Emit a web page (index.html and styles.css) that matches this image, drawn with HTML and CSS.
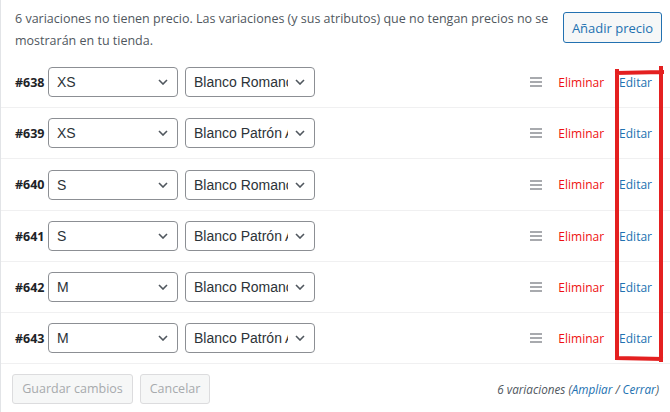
FILE: index.html
```html
<!DOCTYPE html>
<html lang="es">
<head>
<meta charset="utf-8">
<link rel="stylesheet" href="styles.css">
</head>
<body>
<div class="panel">
  <div class="notice">
    <p class="notice-text">6 variaciones no tienen precio. Las variaciones (y sus atributos) que no tengan precios no se mostrarán en tu tienda.</p>
    <button class="btn btn-primary-outline">Añadir precio</button>
  </div>

  <div class="rows">
    <div class="row">
      <strong class="vid">#638</strong>
      <div class="select"><span class="sel-text">XS</span><svg class="chev" width="10" height="6" viewBox="0 0 10 6"><path d="M1 1l4 4 4-4" fill="none" stroke="#50575e" stroke-width="1.6"/></svg></div>
      <div class="select"><span class="sel-text">Blanco Romance</span><svg class="chev" width="10" height="6" viewBox="0 0 10 6"><path d="M1 1l4 4 4-4" fill="none" stroke="#50575e" stroke-width="1.6"/></svg></div>
      <div class="actions">
        <svg class="handle" width="12" height="10" viewBox="0 0 12 10"><path d="M0 1h12M0 5h12M0 9h12" stroke="#8c8f94" stroke-width="1.6"/></svg>
        <a class="del">Eliminar</a>
        <a class="edit">Editar</a>
      </div>
    </div>
    <div class="row">
      <strong class="vid">#639</strong>
      <div class="select"><span class="sel-text">XS</span><svg class="chev" width="10" height="6" viewBox="0 0 10 6"><path d="M1 1l4 4 4-4" fill="none" stroke="#50575e" stroke-width="1.6"/></svg></div>
      <div class="select"><span class="sel-text">Blanco Patrón Azul</span><svg class="chev" width="10" height="6" viewBox="0 0 10 6"><path d="M1 1l4 4 4-4" fill="none" stroke="#50575e" stroke-width="1.6"/></svg></div>
      <div class="actions">
        <svg class="handle" width="12" height="10" viewBox="0 0 12 10"><path d="M0 1h12M0 5h12M0 9h12" stroke="#8c8f94" stroke-width="1.6"/></svg>
        <a class="del">Eliminar</a>
        <a class="edit">Editar</a>
      </div>
    </div>
    <div class="row">
      <strong class="vid">#640</strong>
      <div class="select"><span class="sel-text">S</span><svg class="chev" width="10" height="6" viewBox="0 0 10 6"><path d="M1 1l4 4 4-4" fill="none" stroke="#50575e" stroke-width="1.6"/></svg></div>
      <div class="select"><span class="sel-text">Blanco Romance</span><svg class="chev" width="10" height="6" viewBox="0 0 10 6"><path d="M1 1l4 4 4-4" fill="none" stroke="#50575e" stroke-width="1.6"/></svg></div>
      <div class="actions">
        <svg class="handle" width="12" height="10" viewBox="0 0 12 10"><path d="M0 1h12M0 5h12M0 9h12" stroke="#8c8f94" stroke-width="1.6"/></svg>
        <a class="del">Eliminar</a>
        <a class="edit">Editar</a>
      </div>
    </div>
    <div class="row">
      <strong class="vid">#641</strong>
      <div class="select"><span class="sel-text">S</span><svg class="chev" width="10" height="6" viewBox="0 0 10 6"><path d="M1 1l4 4 4-4" fill="none" stroke="#50575e" stroke-width="1.6"/></svg></div>
      <div class="select"><span class="sel-text">Blanco Patrón Azul</span><svg class="chev" width="10" height="6" viewBox="0 0 10 6"><path d="M1 1l4 4 4-4" fill="none" stroke="#50575e" stroke-width="1.6"/></svg></div>
      <div class="actions">
        <svg class="handle" width="12" height="10" viewBox="0 0 12 10"><path d="M0 1h12M0 5h12M0 9h12" stroke="#8c8f94" stroke-width="1.6"/></svg>
        <a class="del">Eliminar</a>
        <a class="edit">Editar</a>
      </div>
    </div>
    <div class="row">
      <strong class="vid">#642</strong>
      <div class="select"><span class="sel-text">M</span><svg class="chev" width="10" height="6" viewBox="0 0 10 6"><path d="M1 1l4 4 4-4" fill="none" stroke="#50575e" stroke-width="1.6"/></svg></div>
      <div class="select"><span class="sel-text">Blanco Romance</span><svg class="chev" width="10" height="6" viewBox="0 0 10 6"><path d="M1 1l4 4 4-4" fill="none" stroke="#50575e" stroke-width="1.6"/></svg></div>
      <div class="actions">
        <svg class="handle" width="12" height="10" viewBox="0 0 12 10"><path d="M0 1h12M0 5h12M0 9h12" stroke="#8c8f94" stroke-width="1.6"/></svg>
        <a class="del">Eliminar</a>
        <a class="edit">Editar</a>
      </div>
    </div>
    <div class="row">
      <strong class="vid">#643</strong>
      <div class="select"><span class="sel-text">M</span><svg class="chev" width="10" height="6" viewBox="0 0 10 6"><path d="M1 1l4 4 4-4" fill="none" stroke="#50575e" stroke-width="1.6"/></svg></div>
      <div class="select"><span class="sel-text">Blanco Patrón Azul</span><svg class="chev" width="10" height="6" viewBox="0 0 10 6"><path d="M1 1l4 4 4-4" fill="none" stroke="#50575e" stroke-width="1.6"/></svg></div>
      <div class="actions">
        <svg class="handle" width="12" height="10" viewBox="0 0 12 10"><path d="M0 1h12M0 5h12M0 9h12" stroke="#8c8f94" stroke-width="1.6"/></svg>
        <a class="del">Eliminar</a>
        <a class="edit">Editar</a>
      </div>
    </div>
  </div>

  <div class="footer">
    <div class="footer-buttons">
      <button class="btn btn-disabled btn-save">Guardar cambios</button>
      <button class="btn btn-disabled btn-cancel">Cancelar</button>
    </div>
    <span class="count">6 variaciones (<a class="link">Ampliar</a> / <a class="link">Cerrar</a>)</span>
  </div>

  <svg class="annotation" width="56" height="300" viewBox="0 0 56 300">
    <path d="M4 7 L49 6 M48 2 L48 294 M4 5 L4 292 L48 293" fill="none" stroke="#e42020" stroke-width="4" stroke-linecap="square"/>
  </svg>
</div>
</body>
</html>
```

FILE: styles.css
```css
* { box-sizing: border-box; }
html, body { margin: 0; padding: 0; background: #fff; }
body {
  font-family: "Open Sans", "Noto Sans", sans-serif;
  font-size: 13px;
  color: #3c434a;
}
.panel {
  position: relative;
  width: 670px;
  height: 412px;
  border-left: 1px solid #e2e4e7;
}
.notice {
  display: flex;
  justify-content: space-between;
  align-items: flex-start;
  padding: 8px 8px 0 14px;
  height: 57px;
}
.notice-text {
  margin: 0;
  width: 540px;
  line-height: 22px;
  font-size: 12.5px;
  color: #50575e;
}
.btn {
  font-family: inherit;
  font-size: 12.5px;
  border-radius: 3px;
  padding: 0;
  line-height: 28px;
  cursor: pointer;
}
.btn-primary-outline {
  margin-top: 4px;
  height: 31px;
  width: 99px;
  font-size: 13px;
  color: #2271b1;
  border: 1px solid #2271b1;
  background: #f6f7f7;
}
.row {
  display: flex;
  align-items: center;
  height: 51px;
  border-bottom: 1px solid #f0f0f1;
  padding-left: 14px;
}
.row:nth-child(3) { height: 52px; }
.vid {
  width: 33px;
  font-weight: 700;
  font-size: 12.5px;
  color: #1d2327;
}
.select {
  display: flex;
  align-items: center;
  width: 130px;
  height: 30px;
  border: 1px solid #8c8f94;
  border-radius: 4px;
  padding: 0 9px 0 8px;
  margin-right: 7px;
  font-family: "Liberation Sans", Arial, sans-serif;
  font-size: 14px;
  color: #2c3338;
  background: #fff;
}
.sel-text {
  flex: 1;
  overflow: hidden;
  white-space: nowrap;
}
.chev { flex: none; margin-left: 7px; }
.actions {
  margin-left: auto;
  display: flex;
  align-items: center;
  padding-right: 18px;
  font-size: 12px;
}
.handle { margin-right: 16px; }
.del { color: #ee1111; margin-right: 15px; }
.edit { color: #2271b1; }
.footer {
  display: flex;
  justify-content: space-between;
  align-items: center;
  padding: 10px 11px 0 11px;
}
.footer-buttons { display: flex; gap: 7px; }
.btn-disabled {
  height: 30px;
  color: #a7aaad;
  border: 1px solid #dcdcde;
  background: #f6f7f7;
}
.btn-save { width: 121px; }
.btn-cancel { width: 70px; }
.count {
  font-style: italic;
  font-size: 11.7px;
  color: #50575e;
}
.link { color: #2271b1; }
.annotation {
  position: absolute;
  left: 612px;
  top: 66px;
}
```
